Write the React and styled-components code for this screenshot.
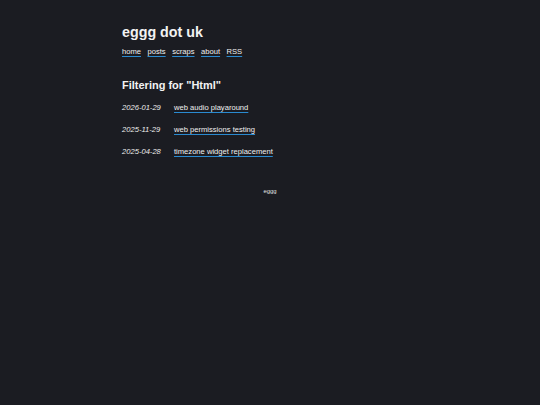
import React from "react";
import styled, { createGlobalStyle } from "styled-components";

const Global = createGlobalStyle`
    html, body {
        margin: 0;
        background: #1b1c22;
        color: #f2f2f2;
        font-family: "Liberation Sans", Arial, sans-serif;
    }
`;

const Page = styled.div`
    max-width: 296px;
    margin: 0 auto;
    padding-top: 24px;
`;

const Title = styled.h1`
    font-size: 14.3px;
    font-weight: bold;
    margin: 0 0 6px 0;
    line-height: 17px;
`;

const Nav = styled.nav`
    display: flex;
    gap: 6.5px;
    font-size: 7.6px;
    line-height: 10px;
`;

const Link = styled.a`
    color: #f0f0f0;
    text-decoration: underline;
    text-decoration-color: #2a8ad0;
    text-decoration-thickness: 1px;
    text-underline-offset: 2px;
`;

const Heading = styled.h2`
    font-size: 11px;
    font-weight: bold;
    margin: 21px 0 11px 0;
    line-height: 14px;
`;

const List = styled.ul`
    list-style: none;
    margin: 0;
    padding: 0;
    display: flex;
    flex-direction: column;
    gap: 12px;
`;

const Item = styled.li`
    display: flex;
    font-size: 7.6px;
    line-height: 10px;
`;

const Date = styled.span`
    font-style: italic;
    width: 52px;
    color: #ececec;
`;

const Footer = styled.footer`
    text-align: center;
    font-size: 5.9px;
    line-height: 8px;
    margin-top: 30px;
    color: #e6e6e6;
`;

const posts = [
    ["2026-01-29", "web audio playaround"],
    ["2025-11-29", "web permissions testing"],
    ["2025-04-28", "timezone widget replacement"],
];

export default function App() {
    return (
        <>
            <Global />
            <Page>
                <Title>eggg dot uk</Title>
                <Nav>
                    {["home", "posts", "scraps", "about", "RSS"].map((n) => (
                        <Link key={n} href="#">{n}</Link>
                    ))}
                </Nav>
                <Heading>Filtering for "Html"</Heading>
                <List>
                    {posts.map(([d, t]) => (
                        <Item key={d}>
                            <Date>{d}</Date>
                            <Link href="#">{t}</Link>
                        </Item>
                    ))}
                </List>
                <Footer>eggg</Footer>
            </Page>
        </>
    );
}
